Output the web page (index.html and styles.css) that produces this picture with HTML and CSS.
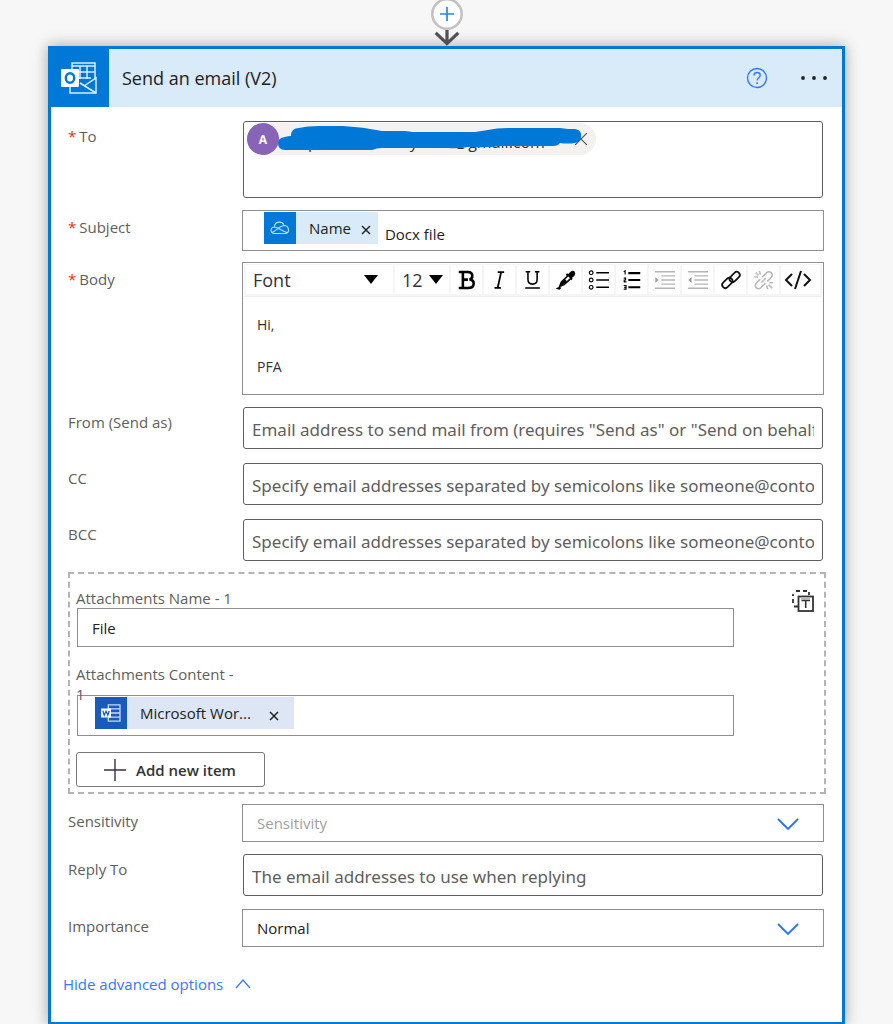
FILE: index.html
```html
<!DOCTYPE html>
<html lang="en">
<head>
<meta charset="utf-8">
<title>Send an email (V2)</title>
<link rel="stylesheet" href="styles.css">
</head>
<body>
<div class="connector">
  <button class="insert" type="button" aria-label="Insert a new step"><svg viewBox="0 0 32 32"><circle cx="16" cy="16" r="14.700" fill="#fff" stroke="#c4c2c0" stroke-width="2.600"/><path d="M9 16h14M16 9v14" stroke="#2b88d8" stroke-width="1.700"/></svg></button>
  <svg class="arrow" viewBox="0 0 28 17"><path d="M14 0v14M2 3l12 11.500L26 3" fill="none" stroke="#505050" stroke-width="3.400"/></svg>
</div>
<main class="card">
  <header class="head">
    <div class="brand"><svg viewBox="0 0 38 34"><g fill="none" stroke="#d9eefc" stroke-width="1.500"><path d="M12 9V2h23v15M12 5h23M20 5v13M27 5v13M19 11h16M19 17h12M10 25v7h26V17L24 25"/><path d="m20 22 16 10"/></g><rect x="1" y="8" width="18" height="18" rx="1" fill="#fff"/><ellipse cx="10" cy="17" rx="4.200" ry="4.800" fill="none" stroke="#0078d7" stroke-width="2.400"/></svg></div>
    <h1 class="title">Send an email (V2)</h1>
    <button class="help" type="button" aria-label="Help"><svg viewBox="0 0 22 22" fill="none" stroke="#2f7bff"><circle cx="11" cy="11" r="9.500" stroke-width="1.400"/><path d="M8 8.400c0-4 6.200-3.800 6.200-.2 0 2.500-3.100 2.500-3.100 5.300" stroke-width="1.400"/><path d="M11.100 15.200v1.700" stroke-width="1.600"/></svg></button>
    <button class="more" type="button" aria-label="More options"><svg viewBox="0 0 28 6" fill="#222"><circle cx="3" cy="3" r="1.900"/><circle cx="14" cy="3" r="1.900"/><circle cx="25" cy="3" r="1.900"/></svg></button>
  </header>
  <form class="form">
    <div class="row row-to">
      <label class="label" for="to"><span class="req">*</span>To</label>
      <div class="people box-round">
        <div class="persona"><span class="avatar">A</span><span class="mail"><span>p</span><span>y</span><span>@gmail.com</span></span>
          <button class="remove" type="button" aria-label="Remove recipient"><svg viewBox="0 0 12 12"><path d="m0 0 12 12M12 0 0 12" stroke="#555" stroke-width="1.200"/></svg></button>
          <svg class="scribble" viewBox="0 0 304 26"><path d="M7 12q3-1 6-1 0-8 8-8 8-2 20-2h24q20 1 39 5h23l8 1h62l13-2q8-2 20-2h52l8 1h7q7 1 6 8-1 5-6 6-8 1-15 0-2 3-7 3h-52q-15 2-33 1-10 2-20 1h-66q-5 0-10 2H7Q0 25 0 18q0-5 7-6z" fill="#0078d7"/></svg>
        </div>
        <input id="to" class="people-input" type="text">
      </div>
    </div>
    <div class="row row-subject">
      <label class="label" for="subject"><span class="req">*</span>Subject</label>
      <div class="tokens box">
        <span class="token token-blue"><span class="token-icon"><svg viewBox="0 0 20 14" fill="none" stroke="#b9dcf6" stroke-width="1.200"><path d="M4.500 12.500C0 12 0 6.500 4.300 6 5 0 12.500-.5 14 4.500c5 .2 6.200 6.500 1.800 8zM4.300 6c3 0 5 2.500 13.500 6M14 4.500C9 5 7.500 9 2 11.500"/></svg></span>Name<button class="token-x" type="button" aria-label="Remove Name"><svg viewBox="0 0 10 10"><path d="m1 1 8 8M9 1 1 9" stroke="#222" stroke-width="1.500"/></svg></button></span>
        <input id="subject" class="plain" type="text" value="Docx file">
      </div>
    </div>
    <div class="row row-body">
      <label class="label" for="body"><span class="req">*</span>Body</label>
      <div class="editor box">
        <div class="tools">
          <span class="pick pick-font"><select aria-label="Font"><option>Font</option></select><svg viewBox="0 0 14 9"><path d="M0 0h14L7 9z"/></svg></span>
          <span class="pick pick-size"><select aria-label="Font size"><option>12</option></select><svg viewBox="0 0 14 9"><path d="M0 0h14L7 9z"/></svg></span>
          <button class="tool" type="button" aria-label="Bold"><svg viewBox="0 0 24 24"><path d="M3 3.300h9.500q5.300 0 5.300 4.300 0 2.800-3 3.700 4.500.7 4.500 4.500 0 5-6.300 5H3M7.500 3.500v17M8 11.600h5" fill="none" stroke="#000" stroke-width="2.800"/></svg></button>
          <button class="tool" type="button" aria-label="Italic"><svg viewBox="0 0 24 24"><path d="M9.500 3.300h7M6 20.700h7M13.200 3.500l-3.700 17" fill="none" stroke="#000" stroke-width="1.900"/></svg></button>
          <button class="tool" type="button" aria-label="Underline"><svg viewBox="0 0 24 24"><path d="M4 3h5M14 3h5M6.500 3v8.500q0 5 5 5t5-5V3M3.500 20.700h16" fill="none" stroke="#000" stroke-width="1.700"/></svg></button>
          <button class="tool" type="button" aria-label="Text colour"><svg viewBox="0 0 24 24"><path d="M17 3q3-2 4.500 0t-.5 4.500l-3 2.500-4-4z"/><path d="m12.500 5.500 6 6" stroke="#000" stroke-width="2.400"/><path d="M14 7.500 7 14l-2 5 5-2 7-6.500" fill="#fff" stroke="#000" stroke-width="1.600"/><path d="m6 18.500 1-4 4-3.500 2 2.500-4 3.500z"/><path d="M1 21.500q3-3 6-1l-2 2z"/></svg></button>
          <button class="tool" type="button" aria-label="Bulleted list"><svg viewBox="0 0 24 24" fill="none" stroke="#000" stroke-width="1.300"><circle cx="3.500" cy="4" r="2"/><circle cx="3.500" cy="12" r="2"/><circle cx="3.500" cy="20" r="2"/><path d="M9 4h14M9 12h14M9 20h14" stroke-width="1.600"/></svg></button>
          <button class="tool" type="button" aria-label="Numbered list"><svg viewBox="0 0 24 24" fill="none" stroke="#000" stroke-width="1.200"><path d="M8 4.500h13M8 12h13M8 20h13" stroke-width="2.200"/><path d="M3 3l1.500-1v4M3 10h2v2H3.500v2H6M3 18h2.500v4H3M3.500 20h2"/></svg></button>
          <button class="tool" type="button" aria-label="Indent"><svg viewBox="0 0 24 24" stroke="#b5b5b5"><path d="M1 3h22M8 7.500h15M8 12h15M8 16.500h15M1 21h22" stroke-width="1.600"/><path d="m1.500 9 3.500 3-3.500 3z" fill="#999" stroke="none"/></svg></button>
          <button class="tool" type="button" aria-label="Outdent"><svg viewBox="0 0 24 24" stroke="#b5b5b5"><path d="M1 3h22M8 7.500h15M8 12h15M8 16.500h15M1 21h22" stroke-width="1.600"/><path d="m5 9-3.500 3L5 15z" fill="#999" stroke="none"/></svg></button>
          <button class="tool" type="button" aria-label="Insert link"><svg viewBox="0 0 24 24" fill="none" stroke="#111" stroke-width="1.900"><rect x="1.500" y="11.800" width="13" height="6.800" rx="3.400" transform="rotate(-45 8 15.200)"/><rect x="9.500" y="5.300" width="13" height="6.800" rx="3.400" transform="rotate(-45 16 8.700)"/></svg></button>
          <button class="tool" type="button" aria-label="Remove link"><svg viewBox="0 0 24 24" fill="none" stroke="#b8b8b8" stroke-width="1.700"><path d="m10 9 5-5q2.500-2 4.800 0t.2 5l-4.500 4.500M13.500 15.500l-5 5q-2.500 2-4.800 0t-.2-5L8 11M9 15l5-5M7 2l1 4M3 4l3 3M1.500 8.500l4 .5M15 18l1 4M17 17l4 4M18 15h4"/></svg></button>
          <button class="tool" type="button" aria-label="Code view"><svg viewBox="0 0 28 24" fill="none" stroke="#111" stroke-width="2"><path d="m8 6-6 6 6 6M20 6l6 6-6 6M17 3l-6 18"/></svg></button>
        </div>
        <textarea id="body" class="text">Hi,

PFA</textarea>
      </div>
    </div>
    <div class="row">
      <label class="label" for="from">From (Send as)</label>
      <input id="from" class="line box-round" type="text" placeholder="Email address to send mail from (requires &quot;Send as&quot; or &quot;Send on behalf of&quot;)">
    </div>
    <div class="row">
      <label class="label" for="cc">CC</label>
      <input id="cc" class="line box-round" type="text" placeholder="Specify email addresses separated by semicolons like someone@contoso.com">
    </div>
    <div class="row row-bcc">
      <label class="label" for="bcc">BCC</label>
      <input id="bcc" class="line box-round" type="text" placeholder="Specify email addresses separated by semicolons like someone@contoso.com">
    </div>
    <section class="attachments">
      <div class="files">
        <label class="file-label" for="file-name">Attachments Name - 1</label>
        <input id="file-name" class="file-name box" type="text" value="File">
        <label class="file-label content-label" for="file-content">Attachments Content - 1</label>
        <div class="tokens file-content box">
          <span class="token token-word"><span class="token-icon"><svg viewBox="0 0 22 20"><path d="M8 1h13v18H8zM8 5.500h13M8 10h13M8 14.500h13" fill="none" stroke="#c8dcf5" stroke-width="1.400"/><rect y="5" width="11" height="10" fill="#fff"/><path d="m2 7.500 1.500 5 2-4.500 2 4.500L9 7.500" fill="none" stroke="#185abd" stroke-width="1.400"/></svg></span>Microsoft Wor...<button class="token-x" type="button" aria-label="Remove attachment content"><svg viewBox="0 0 10 10"><path d="m1 1 8 8M9 1 1 9" stroke="#222" stroke-width="1.500"/></svg></button></span>
          <input id="file-content" class="plain" type="text">
        </div>
        <button class="add" type="button"><svg viewBox="0 0 22 22"><path d="M0 11h22M11 0v22" stroke="#3b2f4a" stroke-width="1.400"/></svg>Add new item</button>
      </div>
      <button class="switch" type="button" aria-label="Switch to input entire array"><svg viewBox="0 0 22 22" fill="none" stroke="#333"><path d="M1 6V4M4 1h4M11 1h4M17 2v3M1 9v4M2 16.500h4" stroke-width="1.800"/><rect x="6.500" y="6.500" width="14.500" height="14.500" stroke-width="1.800"/><path d="M9 8.500h9" stroke="#bbb" stroke-width="2"/><path d="M9.500 10.500h8.500M13.700 10.500V18" stroke-width="1.600"/></svg></button>
    </section>
    <div class="row row-select">
      <label class="label" for="sensitivity">Sensitivity</label>
      <span class="drop"><select id="sensitivity" class="box unset"><option>Sensitivity</option></select><svg viewBox="0 0 22 13"><path d="m1 1 10 10L21 1" fill="none" stroke="#2672ff" stroke-width="1.800"/></svg></span>
    </div>
    <div class="row row-reply">
      <label class="label" for="reply">Reply To</label>
      <input id="reply" class="line box-round" type="text" placeholder="The email addresses to use when replying">
    </div>
    <div class="row row-select">
      <label class="label" for="importance">Importance</label>
      <span class="drop"><select id="importance" class="box"><option>Normal</option></select><svg viewBox="0 0 22 13"><path d="m1 1 10 10L21 1" fill="none" stroke="#2672ff" stroke-width="1.800"/></svg></span>
    </div>
    <a class="advanced" href="#">Hide advanced options<svg viewBox="0 0 16 10"><path d="m1 9 7-8 7 8" fill="none" stroke="#2f7bff" stroke-width="1.200"/></svg></a>
  </form>
</main>
</body>
</html>
```
FILE: styles.css
```css
* { box-sizing: border-box; }
body {
  margin: 0;
  background: #f7f7f7;
  color: #222;
  font: 15px/20px "Open Sans", "Noto Sans", sans-serif;
}
button, input, select, textarea { font: inherit; color: inherit; margin: 0; }
button { border: 0; padding: 0; background: none; cursor: pointer; }
svg { display: block; flex: none; }
input, textarea, select { outline: 0; border-radius: 0; min-width: 0; }

.connector {
  height: 46px;
  display: flex;
  flex-direction: column;
  align-items: center;
  justify-content: flex-end;
}
.insert svg { width: 32px; height: 32px; }
.arrow { width: 28px; height: 16px; }

.card {
  margin: 0 48px;
  border: 3px solid #0078d7;
  background: #fff;
  box-shadow: 0 0 14px rgba(0, 0, 0, 0.35);
}
.head {
  display: flex;
  align-items: center;
  height: 58px;
  background: #d9eaf8;
}
.brand {
  width: 58px;
  height: 58px;
  padding-right: 2px;
  display: grid;
  place-items: center;
  background: #0078d7;
}
.brand svg { width: 38px; height: 34px; }
.title { flex: 1; margin: 0 0 0 13px; font-size: 18px; font-weight: 400; line-height: 24px; }
.help svg { width: 22px; height: 22px; }
.more { margin: 0 14px 0 32px; }
.more svg { width: 28px; height: 6px; }

.form { padding: 14px 18px 28px 17px; }
.row {
  display: grid;
  grid-template-columns: 174px 1fr;
  align-items: start;
  margin-bottom: 14px;
}
.label { padding-top: 5px; color: #605e5c; }
.req { color: #e0301e; margin-right: 3px; }
.box { border: 1px solid #8f8f8f; background: #fff; }
.box-round { border: 1px solid #605e5c; border-radius: 3px; background: #fff; margin: 0 1px; }

.row-to { margin-bottom: 12px; }
.people { height: 77px; display: flex; align-items: flex-start; padding: 1px 3px; }
.people-input { flex: 1; border: 0; background: none; }
.persona {
  position: relative;
  display: flex;
  align-items: center;
  width: 349px;
  height: 32px;
  border-radius: 16px;
  background: #f3f2f1;
}
.avatar {
  width: 32px;
  height: 32px;
  border-radius: 50%;
  background: #8764b8;
  color: #fff;
  font-size: 12px;
  font-weight: 700;
  line-height: 34px;
  text-align: center;
}
.mail { flex: 1; display: flex; gap: 36px; padding: 5px 0 0 29px; font-size: 16px; color: #333; }
.mail span:first-child { margin-right: 56px; }
.remove { margin-right: 9px; }
.remove svg { width: 12px; height: 12px; }
.scribble { position: absolute; left: 31px; top: 2px; width: 304px; height: 26px; }

.row-subject { margin-bottom: 11px; }
.row-subject .label { padding-top: 7px; }
.tokens { display: flex; align-items: flex-start; height: 41px; padding: 1px 8px 0 21px; }
.token { display: flex; align-items: center; height: 32px; white-space: nowrap; }
.token-blue { background: #d9eaf8; }
.token-word { background: #dce6f5; }
.token-icon {
  width: 32px;
  height: 32px;
  margin-right: 13px;
  display: grid;
  place-items: center;
  background: #0078d7;
}
.token-icon svg { width: 20px; height: 18px; }
.token-word .token-icon { background: #185abd; }
.token-x { padding: 3px 7px 0 10px; }
.token-word .token-x { padding: 6px 15px 0 18px; }
.token-x svg { width: 10px; height: 10px; }
.plain { flex: 1; height: 37px; padding: 7px 0 0 7px; border: 0; background: none; }

.row-body { margin-bottom: 12px; }
.row-body .label { padding-top: 7px; }
.editor { height: 133px; padding: 1px; display: flex; flex-direction: column; }
.tools {
  display: flex;
  gap: 2px;
  padding: 1px 2px 2px;
  background: #f5f5f5;
  border-bottom: 1px solid #eee;
}
.pick { position: relative; height: 29px; background: #fff; font-size: 18px; color: #333; }
.pick select { appearance: none; width: 100%; height: 29px; padding: 0 0 0 7px; border: 0; background: none; }
.pick svg { position: absolute; top: 10px; width: 14px; height: 9px; pointer-events: none; }
.pick-font { width: 147px; }
.pick-font svg { right: 15px; }
.pick-size { width: 54px; }
.pick-size svg { right: 6px; }
.tool { width: 31px; height: 29px; display: grid; place-items: center; background: #fff; }
.tool svg { width: 24px; height: 22px; }
.tool:last-child { flex: 1; justify-content: start; padding-left: 3px; }
.tool:last-child svg { width: 28px; height: 24px; }
.text { flex: 1; padding: 17px 13px; border: 0; resize: none; font-size: 14px; line-height: 21px; color: #333; background: none; }

.line { height: 42px; padding: 2px 8px 0; font: 17px/24px "Noto Sans", "Open Sans", sans-serif; }
.line::placeholder { color: #605e5c; opacity: 1; }
.row-bcc { margin-bottom: 11px; }

.attachments {
  display: flex;
  justify-content: space-between;
  align-items: flex-start;
  margin: 0 -2px 10px 0;
  padding: 14px 10px 5px 6px;
  border: 2px dashed #b4b4b4;
}
.files { flex: 1; max-width: 659px; display: flex; flex-direction: column; align-items: flex-start; }
.file-label { width: 165px; color: #605e5c; }
.file-name { width: calc(100% - 2px); height: 39px; margin: 0 0 17px 1px; padding: 0 14px; }
.content-label { position: relative; z-index: 1; height: 31px; pointer-events: none; }
.file-content { width: calc(100% - 2px); margin-left: 1px; padding-left: 17px; }
.add {
  display: flex;
  align-items: center;
  gap: 10px;
  width: 189px;
  height: 35px;
  margin-top: 16px;
  padding-left: 27px;
  border: 1px solid #7a7876;
  border-radius: 3px;
  color: #333;
  font-weight: 600;
}
.add svg { width: 22px; height: 22px; }
.switch { margin-top: 2px; }
.switch svg { width: 22px; height: 22px; }

.row-select { margin-bottom: 12px; }
.row-select .label { padding-top: 7px; }
.row-reply { margin-bottom: 13px; }
.drop { position: relative; }
.drop select { display: block; appearance: none; width: 100%; height: 38px; padding: 0 14px; }
.drop .unset { color: #a0a0a0; }
.drop svg { position: absolute; right: 25px; top: 14px; width: 22px; height: 13px; pointer-events: none; }

.advanced {
  display: flex;
  align-items: center;
  gap: 12px;
  width: fit-content;
  margin: 27px 0 0 -5px;
  color: #2f7bff;
  text-decoration: none;
}
.advanced svg { width: 16px; height: 10px; }
```
